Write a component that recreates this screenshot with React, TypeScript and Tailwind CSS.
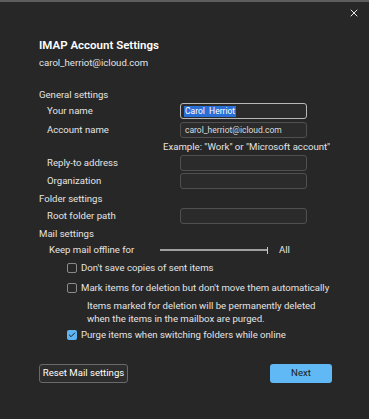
import { Check, X } from "lucide-react";

function Field({ label, value, focused }: { label: string; value?: string; focused?: boolean }) {
  return (
    <div className="flex h-[16px] items-center pl-[8px]">
      <span className="w-[133px] shrink-0">{label}</span>
      <div
        className={
          focused
            ? "flex h-[16px] w-[127px] items-center rounded-[3px] border-[1.5px] border-[#b8b8b8] bg-[#2b2b2b] px-[3px]"
            : "flex h-[16px] w-[127px] items-center rounded-[3px] border border-[#505050] bg-[#2b2b2b] px-[4px]"
        }
      >
        {focused ? (
          <span className="whitespace-pre bg-[#2a6fd6] px-[1px] text-[8.5px] leading-[11px] text-white">{value}</span>
        ) : (
          <span className="text-[8.5px] text-[#dcdcdc]">{value}</span>
        )}
      </div>
    </div>
  );
}

function Box({ checked, label }: { checked?: boolean; label: string }) {
  return (
    <div className="flex h-[16px] items-center gap-[4px] whitespace-nowrap pl-[28px]">
      {checked ? (
        <span className="flex h-[10px] w-[10px] items-center justify-center rounded-[2px] bg-[#5fb4f2]">
          <Check size={8} strokeWidth={3} className="text-[#1b1b1b]" />
        </span>
      ) : (
        <span className="h-[10px] w-[10px] rounded-[2px] border border-[#8a8a8a]" />
      )}
      <span>{label}</span>
    </div>
  );
}

export default function App() {
  return (
    <div
      className="h-[419px] w-[369px] overflow-hidden whitespace-nowrap border-t-2 border-[#5e5e5e] bg-[#272727] text-[9.6px] text-[#e4e4e4]"
      style={{ fontFamily: 'Roboto, "Noto Sans", sans-serif' }}
    >
      <div className="flex h-[22px] items-center justify-end pr-[9px]">
        <X size={12} strokeWidth={1.8} className="text-white" />
      </div>

      <div className="px-[39px]">
        <div className="mt-[13px] flex h-[18px] items-center text-[11.5px] font-semibold text-white">
          IMAP Account Settings
        </div>
        <div className="flex h-[16px] items-center">carol_herriot@icloud.com</div>

        <div className="mt-[16px] flex h-[16px] items-center">General settings</div>
        <Field label="Your name" value="Carol  Herriot" focused />
        <div className="mt-[3px]">
          <Field label="Account name" value="carol_herriot@icloud.com" />
        </div>
        <div className="mt-[1px] flex h-[16px] items-center pl-[124px]">Example: "Work" or "Microsoft account"</div>
        <Field label="Reply-to address" />
        <div className="mt-[2px]">
          <Field label="Organization" />
        </div>

        <div className="mt-[2px] flex h-[16px] items-center">Folder settings</div>
        <div className="mt-[1px]">
          <Field label="Root folder path" />
        </div>

        <div className="mt-[2px] flex h-[16px] items-center">Mail settings</div>
        <div className="flex h-[16px] items-center pl-[10px]">
          <span className="w-[111px] shrink-0">Keep mail offline for</span>
          <div className="flex w-[108px] items-center">
            <div className="h-[2px] flex-1 bg-[#a0a0a0]" />
            <div className="h-[7px] w-[1.5px] bg-[#c8c8c8]" />
          </div>
          <span className="ml-[11px]">All</span>
        </div>

        <div className="mt-[2px]">
          <Box label="Don't save copies of sent items" />
        </div>
        <div className="mt-[4px]">
          <Box label="Mark items for deletion but don't move them automatically" />
        </div>
        <div className="mt-[3px] pl-[48px] leading-[13px]">
          <div>Items marked for deletion will be permanently deleted</div>
          <div>when the items in the mailbox are purged.</div>
        </div>
        <div className="mt-[2px]">
          <Box checked label="Purge items when switching folders while online" />
        </div>

        <div className="mt-[21px] flex items-center justify-between">
          <button className="flex h-[19px] w-[89px] items-center justify-center rounded-[3px] border border-[#6a6a6a] bg-[#2d2d2d] text-[9.6px] text-white">
            Reset Mail settings
          </button>
          <button className="-mr-[2px] flex h-[19px] w-[62px] items-center justify-center rounded-[3px] bg-[#60b8f4] text-[9.6px] text-[#1a1a1a]">
            Next
          </button>
        </div>
      </div>
    </div>
  );
}
